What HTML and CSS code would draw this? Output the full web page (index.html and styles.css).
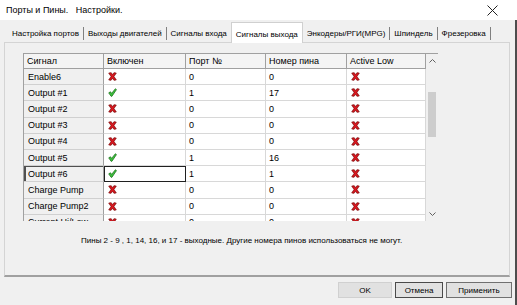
FILE: index.html
```html
<!DOCTYPE html>
<html lang="ru">
<head>
<meta charset="utf-8">
<link rel="stylesheet" href="styles.css">
</head>
<body>
<svg width="0" height="0" class="defs">
  <defs>
    <symbol id="ix" viewBox="0 0 10 10">
      <path d="M0.8 1.2 L3.6 0.8 L5 3 L6.6 0.8 L9.2 1.2 L6.6 5 L9.2 8.8 L6.6 9.2 L5 7 L3.4 9.2 L0.8 8.8 L3.4 5 Z" fill="#d81820" stroke="#7a0808" stroke-width="0.8" stroke-linejoin="round"/>
    </symbol>
    <symbol id="iv" viewBox="0 0 10 10">
      <path d="M0.8 5.4 L2.8 4.2 L4 6 L8.2 0.8 L9.4 1.8 L4.4 9.2 L3.4 9.2 Z" fill="#3cc23c" stroke="#146a14" stroke-width="0.8" stroke-linejoin="round"/>
    </symbol>
  </defs>
</svg>
<div class="window">
  <div class="titlebar">
    <span class="title">Порты и Пины.   Настройки.</span>
    <svg class="close" width="11" height="11" viewBox="0 0 11 11"><path d="M0.5 0.5 L10.5 10.5 M10.5 0.5 L0.5 10.5" stroke="#222" stroke-width="1"/></svg>
  </div>
  <div class="content">
    <div class="tabstrip">
      <div class="tab">Настройка портов</div>
      <div class="tab">Выходы двигателей</div>
      <div class="tab">Сигналы входа</div>
      <div class="tab active">Сигналы выхода</div>
      <div class="tab">Энкодеры/РГИ(MPG)</div>
      <div class="tab">Шпиндель</div>
      <div class="tab">Фрезеровка</div>
    </div>
    <div class="panel">
      <div class="grid-wrap">
        <div class="grid">
          <div class="c hdr">Сигнал</div>
          <div class="c hdr">Включен</div>
          <div class="c hdr">Порт №</div>
          <div class="c hdr">Номер пина</div>
          <div class="c hdr">Active Low</div>

          <div class="c rh">Enable6</div>
          <div class="c ic"><svg><use href="#ix"/></svg></div>
          <div class="c">0</div><div class="c">0</div>
          <div class="c ic"><svg><use href="#ix"/></svg></div>

          <div class="c rh">Output #1</div>
          <div class="c ic"><svg><use href="#iv"/></svg></div>
          <div class="c">1</div><div class="c">17</div>
          <div class="c ic"><svg><use href="#ix"/></svg></div>

          <div class="c rh">Output #2</div>
          <div class="c ic"><svg><use href="#ix"/></svg></div>
          <div class="c">0</div><div class="c">0</div>
          <div class="c ic"><svg><use href="#ix"/></svg></div>

          <div class="c rh">Output #3</div>
          <div class="c ic"><svg><use href="#ix"/></svg></div>
          <div class="c">0</div><div class="c">0</div>
          <div class="c ic"><svg><use href="#ix"/></svg></div>

          <div class="c rh">Output #4</div>
          <div class="c ic"><svg><use href="#ix"/></svg></div>
          <div class="c">0</div><div class="c">0</div>
          <div class="c ic"><svg><use href="#ix"/></svg></div>

          <div class="c rh">Output #5</div>
          <div class="c ic"><svg><use href="#iv"/></svg></div>
          <div class="c">1</div><div class="c">16</div>
          <div class="c ic"><svg><use href="#ix"/></svg></div>

          <div class="c rh sel">Output #6</div>
          <div class="c ic cur"><svg><use href="#iv"/></svg></div>
          <div class="c">1</div><div class="c">1</div>
          <div class="c ic"><svg><use href="#ix"/></svg></div>

          <div class="c rh">Charge Pump</div>
          <div class="c ic"><svg><use href="#ix"/></svg></div>
          <div class="c">0</div><div class="c">0</div>
          <div class="c ic"><svg><use href="#ix"/></svg></div>

          <div class="c rh">Charge Pump2</div>
          <div class="c ic"><svg><use href="#ix"/></svg></div>
          <div class="c">0</div><div class="c">0</div>
          <div class="c ic"><svg><use href="#ix"/></svg></div>

          <div class="c rh">Current Hi/Low</div>
          <div class="c ic"><svg><use href="#ix"/></svg></div>
          <div class="c">0</div><div class="c">0</div>
          <div class="c ic"><svg><use href="#ix"/></svg></div>
        </div>
        <div class="vscroll">
          <div class="sbtn"><svg width="7" height="4" viewBox="0 0 7 4"><path d="M0.5 3.5 L3.5 0.5 L6.5 3.5" fill="none" stroke="#606060" stroke-width="1"/></svg></div>
          <div class="track"><div class="thumb"></div></div>
          <div class="sbtn"><svg width="7" height="4" viewBox="0 0 7 4"><path d="M0.5 0.5 L3.5 3.5 L6.5 0.5" fill="none" stroke="#606060" stroke-width="1"/></svg></div>
        </div>
      </div>
      <div class="note">Пины 2 - 9 , 1, 14, 16, и 17 - выходные. Другие номера пинов использоваться не могут.</div>
    </div>
    <div class="buttons">
      <div class="btn ok">OK</div>
      <div class="btn cancel">Отмена</div>
      <div class="btn apply">Применить</div>
    </div>
  </div>
</div>
</body>
</html>
```

FILE: styles.css
```css
* { box-sizing: border-box; }
html, body { margin: 0; padding: 0; }
body {
  width: 517px;
  height: 305px;
  overflow: hidden;
  background: #f0f0f0;
  font-family: "Liberation Sans", Arial, sans-serif;
  color: #000;
}
.defs { position: absolute; width: 0; height: 0; }
.window { display: flex; flex-direction: column; height: 305px; }
.titlebar {
  height: 20px;
  background: #fff;
  display: flex;
  align-items: center;
  justify-content: space-between;
  padding: 0 19px 0 6px;
  flex: none;
}
.title { font-size: 9px; white-space: pre; }
.close { display: block; }
.content {
  flex: 1;
  display: flex;
  flex-direction: column;
  border-right: 2px solid #4d4d4d;
}
.tabstrip {
  height: 22px;
  display: flex;
  align-items: flex-end;
  padding-left: 8px;
  margin-right: 7px;
  flex: none;
}
.tab {
  font-size: 8px;
  height: 13px;
  line-height: 13px;
  margin-bottom: 2px;
  padding: 0 4px;
  border-right: 1px solid #808080;
  white-space: nowrap;
}
.tab.active {
  height: 21px;
  padding: 5px 4px 3px;
  margin-bottom: -1px;
  margin-left: -1px;
  background: #fff;
  border: 1px solid #d0d0d0;
  border-bottom: none;
  position: relative;
  z-index: 1;
}
.panel {
  height: 235px;
  margin: 0 5px 0 4px;
  border: 1px solid #d4d4d4;
  border-bottom: 2px solid #a0a0a0;
  padding: 10px 0 0 18px;
  flex: none;
}
.grid-wrap {
  display: flex;
  width: 415px;
  height: 168px;
  border-top: 1px solid #a0a0a0;
  border-left: 1px solid #a0a0a0;
  background: #fff;
}
.grid {
  flex: 1;
  overflow: hidden;
  display: grid;
  grid-template-columns: 80px 82px 80px 81px 79px;
  grid-template-rows: 15px;
  grid-auto-rows: 16.2px;
  align-content: start;
}
.c {
  font-size: 9px;
  display: flex;
  align-items: center;
  padding-left: 3px;
  border-right: 1px solid #d8d8d8;
  border-bottom: 1px solid #d8d8d8;
  white-space: nowrap;
  overflow: hidden;
}
.hdr {
  background: #f4f4f4;
  border-right: 1px solid #a0a0a0;
  border-bottom: 1px solid #a0a0a0;
}
.rh {
  background: #f0f0f0;
  padding-left: 4px;
  border-right: 1px solid #a0a0a0;
  border-bottom: 1px solid #d0d0d0;
}
.rh.sel { box-shadow: inset 2px 1px 0 #505050; }
.ic { padding-left: 4px; }
.ic svg { width: 9px; height: 9px; display: block; }
.cur { outline: 1px solid #202020; outline-offset: -1px; }
.vscroll {
  width: 12px;
  background: #f0f0f0;
  display: flex;
  flex-direction: column;
  flex: none;
}
.sbtn {
  height: 14px;
  display: flex;
  align-items: center;
  justify-content: center;
  flex: none;
}
.track { flex: 1; padding: 24px 2px 0; }
.thumb { height: 45px; background: #cdcdcd; }
.note {
  font-size: 8px;
  margin: 15px 0 0 58px;
  white-space: nowrap;
}
.buttons {
  display: flex;
  justify-content: flex-end;
  gap: 3px;
  padding: 5px 3px 0 0;
}
.btn {
  height: 16px;
  font-size: 8px;
  display: flex;
  align-items: center;
  justify-content: center;
  background: #e1e1e1;
  border: 1px solid #c4c4c4;
}
.ok { width: 54px; border-color: #d0d0d0; }
.cancel { width: 48px; border-color: #4a4a4a; }
.apply { width: 66px; border-color: #707070; }
```
